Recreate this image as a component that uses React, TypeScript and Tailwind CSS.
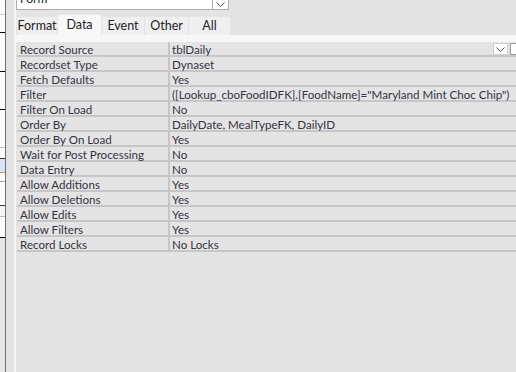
import React from "react";

const rows: [string, string][] = [
  ["Record Source", "tblDaily"],
  ["Recordset Type", "Dynaset"],
  ["Fetch Defaults", "Yes"],
  ["Filter", '([Lookup_cboFoodIDFK].[FoodName]="Maryland Mint Choc Chip")'],
  ["Filter On Load", "No"],
  ["Order By", "DailyDate, MealTypeFK, DailyID"],
  ["Order By On Load", "Yes"],
  ["Wait for Post Processing", "No"],
  ["Data Entry", "No"],
  ["Allow Additions", "Yes"],
  ["Allow Deletions", "Yes"],
  ["Allow Edits", "Yes"],
  ["Allow Filters", "Yes"],
  ["Record Locks", "No Locks"],
];

const tabs = ["Format", "Data", "Event", "Other", "All"];
const tabW = ["w-[40px]", "w-[43px]", "w-[42px]", "w-[43px]", "w-[41px]"];

function Chevron() {
  return (
    <svg width="9" height="5" viewBox="0 0 9 5">
      <path d="M0.5 0.5 L4.5 4.5 L8.5 0.5" fill="none" stroke="#555" strokeWidth="1" />
    </svg>
  );
}

export default function App() {
  return (
    <div
      className="w-[516px] h-[372px] overflow-hidden flex bg-[#e4e4e4] text-[#333340]"
      style={{ fontFamily: 'Lato, "Noto Sans", sans-serif' }}
    >
      {/* left strip */}
      <div className="w-[5px] h-full flex flex-col bg-white">
        <div className="h-[15px] border-b border-[#c8c8c8]" />
        <div className="h-[18px] border-b border-black" />
        <div className="h-[39px] border-b border-black" />
        <div className="h-[38px] border-b border-black" />
        <div className="h-[38px] border-b border-[#bbb]" />
        <div className="h-[11px] border-b border-[#333]" />
        <div className="h-[14px] bg-[#d8e6f4] border-b border-[#c9a04a]" />
        <div className="h-[9px] border-b border-[#aaa]" />
        <div className="h-[24px] border-b border-[#333]" />
        <div className="h-[11px] bg-[#f4f4f4] border-b border-[#bbb]" />
        <div className="h-[21px] border-b border-black" />
        <div className="flex-1 bg-[#e6e6e6]" />
      </div>
      <div className="w-px h-full bg-[#6e6e6e]" />
      <div className="w-[8px] h-full bg-[#e3e3e3]" />
      <div className="w-[2px] h-full bg-[#f5f5f5]" />

      {/* property sheet */}
      <div className="flex-1 flex flex-col min-w-0">
        {/* combo box */}
        <div className="h-[15px] flex items-start">
          <div className="w-[213px] h-[10px] bg-white border border-t-0 border-[#adadad] flex justify-between items-end overflow-hidden">
            <span className="text-[12px] leading-[14px] ml-[3px] mb-[3px] text-[#222]">Form</span>
            <div className="w-[16px] h-[9px] border-l border-[#adadad] flex items-center justify-center">
              <Chevron />
            </div>
          </div>
        </div>
        {/* tabs */}
        <div className="h-[20px] flex items-end gap-px pl-px">
          {tabs.map((t, i) => (
            <div
              key={t}
              className={
                tabW[i] +
                " flex items-center justify-center text-[12.5px] text-[#222] " +
                (t === "Data" ? "h-[20px] bg-[#f8f8f8]" : "h-[18px] bg-[#efefef]")
              }
            >
              {t}
            </div>
          ))}
        </div>
        <div className="h-[7px] bg-[#f7f7f7]" />
        {/* grid */}
        <div className="flex flex-col pl-px">
          {rows.map(([k, v], i) => (
            <div key={k} className="flex h-[15px] border-b-2 border-[#c6c6c6]">
              <div className="w-[151px] pl-[3px] text-[11.6px] leading-[15px] whitespace-nowrap">
                {k}
              </div>
              <div className="w-[2px] bg-[#c6c6c6]" />
              <div className="flex-1 min-w-0 pl-[2px] text-[11.6px] leading-[15px] whitespace-nowrap flex items-start">
                <span className="flex-1">{v}</span>
                {i === 0 && (
                  <>
                    <div className="w-[15px] h-[12px] mt-[1px] bg-white border border-[#cfcfcf] flex items-end justify-center pb-[2px]">
                      <Chevron />
                    </div>
                    <div className="w-[6px] h-[12px] mt-[1px] ml-[2px] bg-white border border-r-0 border-[#999]" />
                  </>
                )}
              </div>
            </div>
          ))}
        </div>
      </div>
    </div>
  );
}
